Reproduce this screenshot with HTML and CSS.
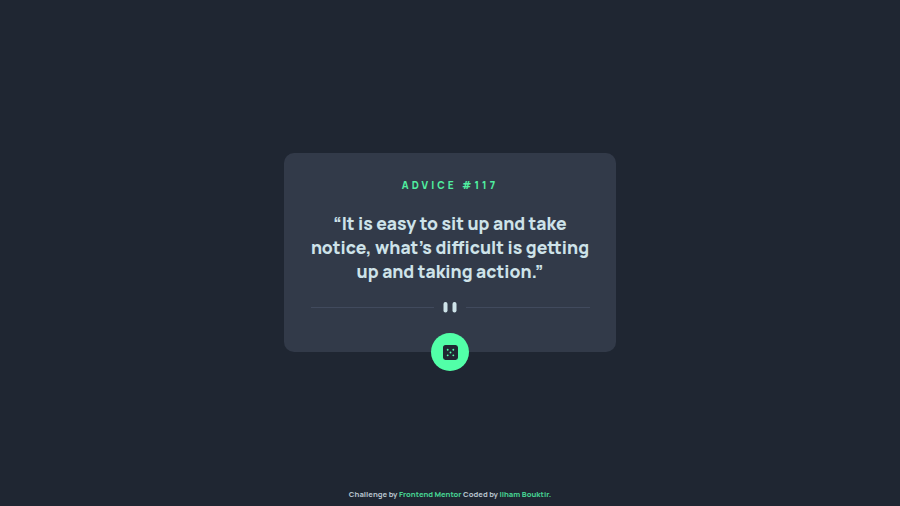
FILE: index.html
```html
<!DOCTYPE html>
<html lang="en">
<head>
<meta charset="utf-8">
<title>Advice generator</title>
<link rel="stylesheet" href="styles.css">
</head>
<body>
<main>
  <article class="card">
    <h1 class="label">ADVICE #117</h1>
    <p class="quote"><span class="line">“It is easy to sit up and take</span> <span class="line">notice, what’s difficult is getting</span> <span class="line">up and taking action.”</span></p>
    <svg class="divider" viewBox="0 0 279 10"><path fill="#414a5d" d="M0 5h123v1H0zM155 5h124v1H155z"/><g fill="#CEE3E9"><rect x="132.500" width="4" height="10.500" rx="1.900"/><rect x="141.500" width="4" height="10.500" rx="1.900"/></g></svg>
    <button class="dice" aria-label="New advice"><svg viewBox="0 0 24 24"><path d="M20 0H4a4.005 4.005 0 0 0-4 4v16a4.005 4.005 0 0 0 4 4h16a4.005 4.005 0 0 0 4-4V4a4.005 4.005 0 0 0-4-4ZM7.5 18a1.5 1.5 0 1 1 0-3 1.5 1.5 0 0 1 0 3Zm0-9a1.5 1.5 0 1 1 0-3 1.5 1.5 0 0 1 0 3Zm4.500 4.500a1.5 1.5 0 1 1 0-3 1.5 1.5 0 0 1 0 3Zm4.500 4.500a1.5 1.5 0 1 1 0-3 1.5 1.5 0 0 1 0 3Zm0-9a1.5 1.5 0 1 1 0-3 1.5 1.5 0 0 1 0 3Z" fill="#202733"/></svg></button>
  </article>
</main>
<footer>Challenge by <a>Frontend Mentor</a> Coded by <a>Ilham Bouktir.</a></footer>
</body>
</html>
```
FILE: styles.css
```css
* { box-sizing: border-box; }
body { margin: 0; height: 506px; background: #1f2632; font-family: Manrope, "Open Sans", sans-serif; display: flex; flex-direction: column; overflow: hidden; }
main { flex: 1; display: flex; flex-direction: column; align-items: center; padding-top: 153px; }
.card { position: relative; width: 332px; height: 199px; border-radius: 10px; background: #323a49; display: flex; flex-direction: column; align-items: center; padding-top: 25px; }
.label { margin: 0; font-size: 10px; line-height: 14px; letter-spacing: 3.1px; font-weight: 800; color: #50efa0; }
.quote { margin: 20px 0 0; font-size: 17.500px; line-height: 23.800px; font-weight: 800; color: #cee3e9; text-align: center; }
.line { display: block; white-space: nowrap; }
.divider { width: 279px; height: 10px; margin-top: 18.600px; flex: none; overflow: visible; }
.dice { position: absolute; left: 147px; bottom: -19px; width: 38px; height: 38px; padding: 0; border: 0; border-radius: 50%; background: #52ffa8; display: grid; place-items: center; }
.dice svg { width: 15px; height: 15px; }
footer { height: 24px; font-size: 7.630px; line-height: 24px; font-weight: 800; text-align: center; color: #b1bfc8; }
footer a { color: #45cf90; }
```
